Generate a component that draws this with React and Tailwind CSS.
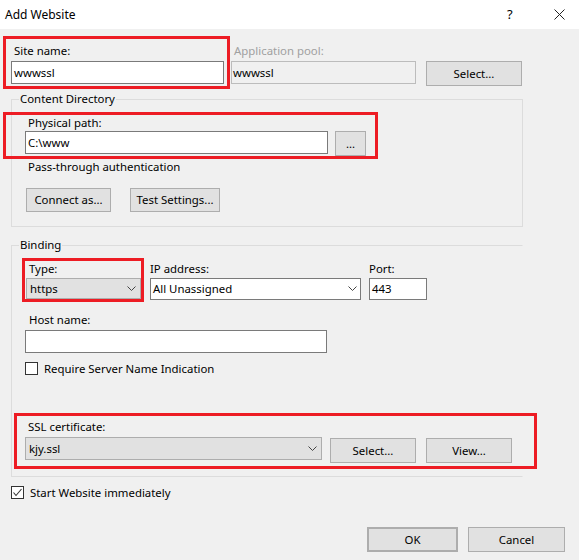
import React from 'react';

const Chevron = () => (
    <svg width="9" height="6" viewBox="0 0 9 6" className="shrink-0">
        <polyline points="0.5,0.5 4.5,4.5 8.5,0.5" fill="none" stroke="#444" strokeWidth="1" />
    </svg>
);

const Button = ({ className = '', children }) => (
    <button
        type="button"
        className={`shrink-0 bg-[#e1e1e1] border border-[#adadad] flex items-center justify-center leading-none text-black ${className}`}
    >
        {children}
    </button>
);

const TextBox = ({ className = '', value }) => (
    <div className={`shrink-0 bg-white border border-[#7a7a7a] flex items-center pl-[2px] leading-none ${className}`}>
        {value}
    </div>
);

const Check = ({ checked }) => (
    <div className="w-[13px] h-[13px] border border-[#333] bg-white flex items-center justify-center shrink-0">
        {checked && (
            <svg width="11" height="11" viewBox="0 0 11 11">
                <polyline points="1.5,5.5 4,8.5 9.5,2" fill="none" stroke="#333" strokeWidth="1.1" />
            </svg>
        )}
    </div>
);

export default function App() {
    return (
        <div
            className="w-[579px] h-[560px] bg-[#f0f0f0] text-[11.4px] text-black overflow-hidden"
            style={{ fontFamily: '"Segoe UI", "Noto Sans", "Open Sans", sans-serif' }}
        >
            {/* title bar */}
            <div className="h-[29px] bg-white flex items-center pl-[5px] text-[12px]">
                <span className="flex-1">Add Website</span>
                <span className="w-[10px] text-[13px]">?</span>
                <div className="ml-[36px] mr-[14px] w-[12px] flex items-center justify-center">
                    <svg width="11" height="11" viewBox="0 0 11 11">
                        <path d="M0.5 0.5 L10.5 10.5 M10.5 0.5 L0.5 10.5" stroke="#222" strokeWidth="1" />
                    </svg>
                </div>
            </div>

            {/* site name / app pool */}
            <div className="flex items-start mt-[7px] pl-[3px]">
                <div className="w-[227px] h-[53px] border-[3px] border-[#ed1c24] pt-[4px] pl-[5px] pr-[3px] shrink-0">
                    <div className="leading-[16px] h-[16px] pl-[3px]">Site name:</div>
                    <TextBox className="mt-[2px] h-[23px] w-[213px]" value="wwwssl" />
                </div>
                <div className="ml-[1px] pt-[7px]">
                    <div className="leading-[16px] h-[16px] pl-[3px] text-[#a0a0a0]">Application pool:</div>
                    <div className="mt-[2px] h-[23px] w-[185px] border border-[#bcbcbc] flex items-center pl-[1px] leading-none">
                        wwwssl
                    </div>
                </div>
                <Button className="ml-[10px] mt-[25px] w-[96px] h-[25px]">Select...</Button>
            </div>

            {/* content directory */}
            <fieldset className="mt-[2px] ml-[11px] w-[512px] min-w-0 border border-[#dcdcdc] pb-[14px]">
                <legend className="ml-[7px] px-[1px] leading-[16px]">Content Directory</legend>
                <div className="mt-[5px] ml-[-9px] w-[375px] h-[47px] border-[3px] border-[#ed1c24] pl-[19px]">
                    <div className="leading-[15px] h-[15px] pl-[3px]">Physical path:</div>
                    <div className="flex items-start mt-[1px]">
                        <TextBox className="w-[303px] h-[23px]" value="C:\www" />
                        <Button className="ml-[7px] w-[31px] h-[25px]">...</Button>
                    </div>
                </div>
                <div className="pl-[16px] leading-[16px]">Pass-through authentication</div>
                <div className="flex mt-[13px] pl-[14px]">
                    <Button className="w-[85px] h-[24px]">Connect as...</Button>
                    <Button className="ml-[19px] w-[90px] h-[24px]">Test Settings...</Button>
                </div>
            </fieldset>

            {/* binding */}
            <fieldset className="mt-[10px] ml-[11px] w-[512px] min-w-0 border border-[#dcdcdc] border-r-transparent pb-[7px]">
                <legend className="ml-[7px] px-[1px] leading-[16px]">Binding</legend>
                <div className="flex items-start mt-[5px]">
                    <div className="ml-[10px] w-[122px] h-[44px] border-[3px] border-[#ed1c24] shrink-0">
                        <div className="leading-[15px] h-[15px] pl-[4px]">Type:</div>
                        <div className="mt-[2px] ml-[1px] w-[115px] h-[21px] bg-[#e1e1e1] border border-[#adadad] flex items-center justify-between pl-[3px] pr-[4px] leading-none">
                            <span>https</span>
                            <Chevron />
                        </div>
                    </div>
                    <div className="ml-[6px] pt-[3px]">
                        <div className="leading-[15px] h-[15px]">IP address:</div>
                        <div className="mt-[2px] w-[211px] h-[22px] bg-white border border-[#7a7a7a] flex items-center justify-between pl-[2px] pr-[3px] leading-none">
                            <span>All Unassigned</span>
                            <Chevron />
                        </div>
                    </div>
                    <div className="ml-[8px] pt-[3px]">
                        <div className="leading-[15px] h-[15px]">Port:</div>
                        <TextBox className="mt-[2px] w-[58px] h-[22px]" value="443" />
                    </div>
                </div>

                <div className="mt-[10px] pl-[17px] leading-[16px]">Host name:</div>
                <TextBox className="mt-[2px] ml-[13px] w-[302px] h-[23px]" value="" />

                <div className="flex items-center h-[13px] mt-[9px] ml-[13px]">
                    <Check />
                    <span className="ml-[6px] leading-none">Require Server Name Indication</span>
                </div>

                <div className="mt-[38px] ml-[2px] w-[523px] h-[56px] border-[3px] border-[#ed1c24] pt-[3px] shrink-0">
                    <div className="leading-[15px] h-[15px] pl-[11px]">SSL certificate:</div>
                    <div className="flex items-start mt-[3px] pl-[8px]">
                        <div className="w-[297px] h-[23px] bg-[#e1e1e1] border border-[#adadad] flex items-center justify-between pl-[3px] pr-[4px] leading-none shrink-0">
                            <span>kjy.ssl</span>
                            <Chevron />
                        </div>
                        <Button className="ml-[8px] mt-[1px] w-[86px] h-[25px]">Select...</Button>
                        <Button className="ml-[10px] mt-[1px] w-[86px] h-[25px]">View...</Button>
                    </div>
                </div>
            </fieldset>

            <div className="flex items-center h-[13px] mt-[9px] ml-[11px]">
                <Check checked />
                <span className="ml-[6px] leading-none">Start Website immediately</span>
            </div>

            <div className="flex justify-end mt-[28px] pr-[14px]">
                <Button className="w-[91px] h-[25px] border-2 border-[#0078d7]">OK</Button>
                <Button className="ml-[10px] w-[97px] h-[25px]">Cancel</Button>
            </div>
        </div>
    );
}
